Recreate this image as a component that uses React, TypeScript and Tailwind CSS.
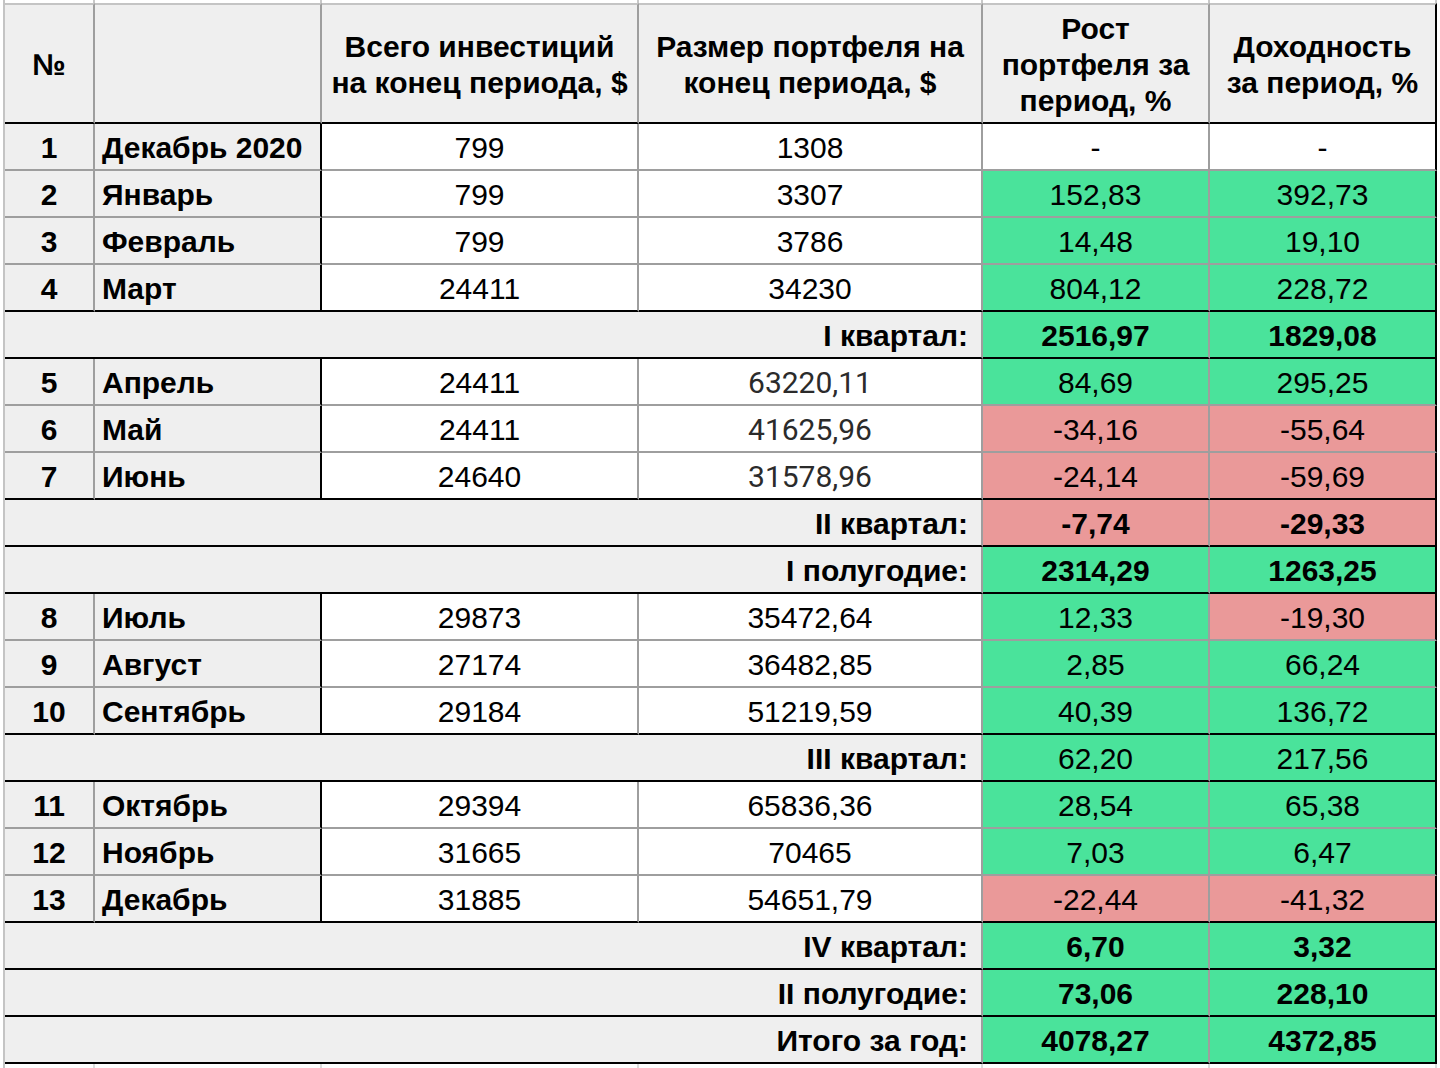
import React from "react";

type Cell = { v: string; c: "g" | "r" | "w" };

type Row =
  | { kind: "data"; n: number; name: string; inv: string; size: string; soft?: boolean; a: Cell; b: Cell }
  | { kind: "sum"; label: string; bold: boolean; a: Cell; b: Cell };

const g = (v: string): Cell => ({ v, c: "g" });
const r = (v: string): Cell => ({ v, c: "r" });
const w = (v: string): Cell => ({ v, c: "w" });

const rows: Row[] = [
  { kind: "data", n: 1, name: "Декабрь 2020", inv: "799", size: "1308", a: w("-"), b: w("-") },
  { kind: "data", n: 2, name: "Январь", inv: "799", size: "3307", a: g("152,83"), b: g("392,73") },
  { kind: "data", n: 3, name: "Февраль", inv: "799", size: "3786", a: g("14,48"), b: g("19,10") },
  { kind: "data", n: 4, name: "Март", inv: "24411", size: "34230", a: g("804,12"), b: g("228,72") },
  { kind: "sum", label: "I квартал:", bold: true, a: g("2516,97"), b: g("1829,08") },
  { kind: "data", n: 5, name: "Апрель", inv: "24411", size: "63220,11", soft: true, a: g("84,69"), b: g("295,25") },
  { kind: "data", n: 6, name: "Май", inv: "24411", size: "41625,96", soft: true, a: r("-34,16"), b: r("-55,64") },
  { kind: "data", n: 7, name: "Июнь", inv: "24640", size: "31578,96", soft: true, a: r("-24,14"), b: r("-59,69") },
  { kind: "sum", label: "II квартал:", bold: true, a: r("-7,74"), b: r("-29,33") },
  { kind: "sum", label: "I полугодие:", bold: true, a: g("2314,29"), b: g("1263,25") },
  { kind: "data", n: 8, name: "Июль", inv: "29873", size: "35472,64", a: g("12,33"), b: r("-19,30") },
  { kind: "data", n: 9, name: "Август", inv: "27174", size: "36482,85", a: g("2,85"), b: g("66,24") },
  { kind: "data", n: 10, name: "Сентябрь", inv: "29184", size: "51219,59", a: g("40,39"), b: g("136,72") },
  { kind: "sum", label: "III квартал:", bold: false, a: g("62,20"), b: g("217,56") },
  { kind: "data", n: 11, name: "Октябрь", inv: "29394", size: "65836,36", a: g("28,54"), b: g("65,38") },
  { kind: "data", n: 12, name: "Ноябрь", inv: "31665", size: "70465", a: g("7,03"), b: g("6,47") },
  { kind: "data", n: 13, name: "Декабрь", inv: "31885", size: "54651,79", a: r("-22,44"), b: r("-41,32") },
  { kind: "sum", label: "IV квартал:", bold: true, a: g("6,70"), b: g("3,32") },
  { kind: "sum", label: "II полугодие:", bold: true, a: g("73,06"), b: g("228,10") },
  { kind: "sum", label: "Итого за год:", bold: true, a: g("4078,27"), b: g("4372,85") },
];

const bg = (c: Cell["c"]) =>
  c === "g" ? "bg-[#4ae39b]" : c === "r" ? "bg-[#ea9999]" : "bg-white";

const base = "flex items-center h-[47px] pt-[2px] border-r-2 border-b-2 text-[30px] leading-none";

export default function App() {
  return (
    <div
      className="min-h-screen bg-white text-black"
      style={{ fontFamily: '"Liberation Sans", Arial, sans-serif' }}
    >
      <div className="ml-[3px] w-[1434px] border-l-2 border-[#c4c4c4]">
        {/* spreadsheet row peeking above */}
        <div className="grid grid-cols-[90px_227px_317px_344px_227px_227px] h-[3px]">
          {[0, 1, 2, 3, 4, 5].map((i) => (
            <div key={i} className="border-r-2 border-[#c8c8c8]" />
          ))}
        </div>

        <div className="grid grid-cols-[90px_227px_317px_344px_227px_227px]">
          {/* header */}
          {["№", "", "Всего инвестиций на конец периода, $", "Размер портфеля на конец периода, $", "Рост портфеля за период, %", "Доходность за период, %"].map(
            (t, i) => (
              <div
                key={i}
                className={`flex items-center justify-center text-center h-[121px] pt-[2px] border-t-2 border-t-[#c4c4c4] border-b-2 border-b-black border-r-2 bg-[#efefef] px-1 text-[30px] leading-[36px] font-bold ${
                  i === 5 ? "border-r-black" : "border-r-[#9e9e9e]"
                }`}
              >
                {t}
              </div>
            )
          )}

          {rows.map((row, idx) => {
            const next = rows[idx + 1];
            const bottom =
              row.kind === "sum" || !next || next.kind === "sum" ? "border-b-black" : "border-b-[#9e9e9e]";
            if (row.kind === "sum") {
              return (
                <React.Fragment key={idx}>
                  <div className={`${base} col-span-4 justify-end pr-[13px] bg-[#efefef] font-bold border-r-[#9e9e9e] ${bottom}`}>
                    {row.label}
                  </div>
                  <div className={`${base} justify-center ${bg(row.a.c)} ${row.bold ? "font-bold" : ""} border-r-[#9e9e9e] ${bottom}`}>
                    {row.a.v}
                  </div>
                  <div className={`${base} justify-center ${bg(row.b.c)} ${row.bold ? "font-bold" : ""} border-r-black ${bottom}`}>
                    {row.b.v}
                  </div>
                </React.Fragment>
              );
            }
            return (
              <React.Fragment key={idx}>
                <div className={`${base} justify-center bg-[#efefef] font-bold border-r-[#9e9e9e] ${bottom}`}>{row.n}</div>
                <div className={`${base} pl-[7px] bg-[#efefef] font-bold border-r-black ${bottom}`}>{row.name}</div>
                <div className={`${base} justify-center bg-white border-r-[#9e9e9e] ${bottom}`}>{row.inv}</div>
                <div
                  className={`${base} justify-center bg-white border-r-[#9e9e9e] ${bottom} ${row.soft ? "text-[#2b2b2b]" : ""}`}
                  style={row.soft ? { fontFamily: "Roboto, sans-serif" } : undefined}
                >
                  {row.size}
                </div>
                <div className={`${base} justify-center ${bg(row.a.c)} border-r-[#9e9e9e] ${bottom}`}>{row.a.v}</div>
                <div className={`${base} justify-center ${bg(row.b.c)} border-r-black ${bottom}`}>{row.b.v}</div>
              </React.Fragment>
            );
          })}
        </div>

        {/* spreadsheet row peeking below */}
        <div className="grid grid-cols-[90px_227px_317px_344px_227px_227px] h-[4px]">
          {[0, 1, 2, 3, 4, 5].map((i) => (
            <div key={i} className="border-r-2 border-[#dcdcdc]" />
          ))}
        </div>
      </div>
    </div>
  );
}
